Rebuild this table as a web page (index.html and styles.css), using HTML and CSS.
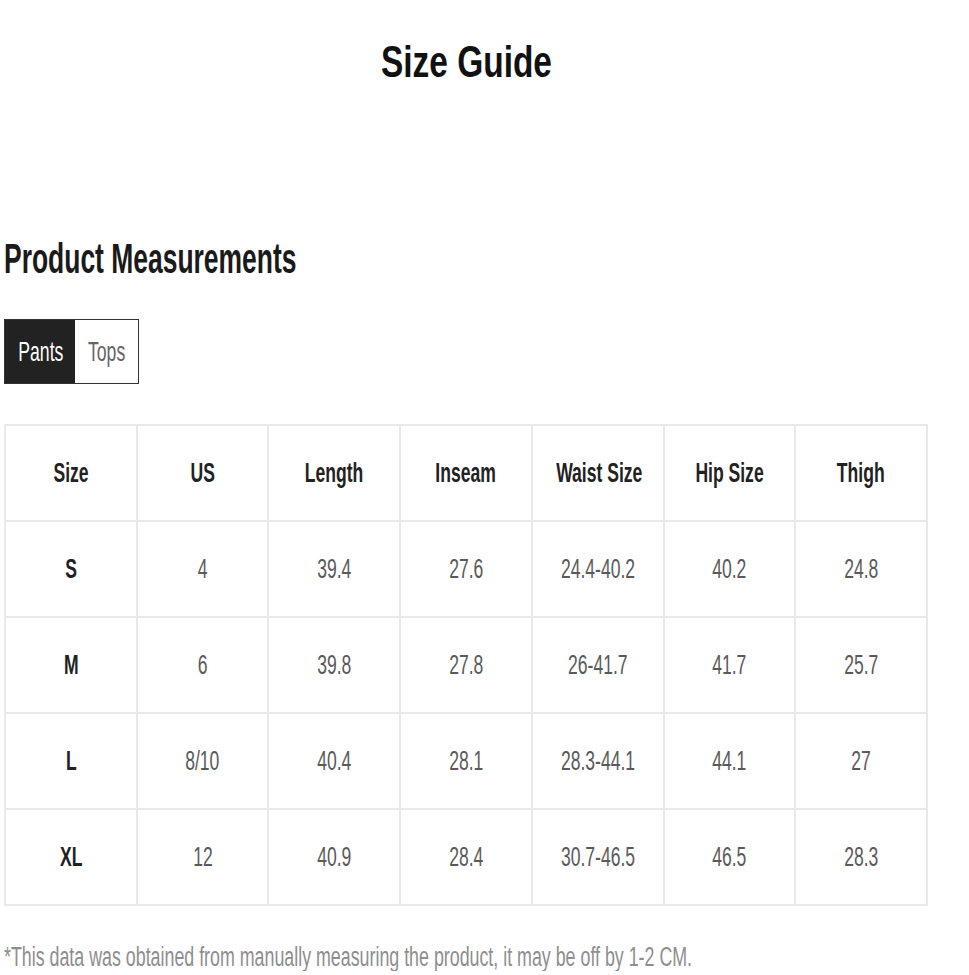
FILE: index.html
```html
<!DOCTYPE html>
<html lang="en">
<head>
  <meta charset="UTF-8">
  <meta name="viewport" content="width=device-width, initial-scale=1.0">
  <title>Size Guide</title>
  <link rel="stylesheet" href="styles.css">
</head>
<body>
  <div class="guide">
    <h1 class="guide-title"><span class="nar">Size Guide</span></h1>

    <h2 class="section-title"><span class="nar">Product Measurements</span></h2>

    <div class="tabs">
      <button type="button" class="tab active"><span class="nar">Pants</span></button>
      <button type="button" class="tab"><span class="nar">Tops</span></button>
    </div>

    <table class="size-table">
      <thead>
        <tr>
          <th><span class="nar">Size</span></th>
          <th><span class="nar">US</span></th>
          <th><span class="nar">Length</span></th>
          <th><span class="nar">Inseam</span></th>
          <th><span class="nar">Waist Size</span></th>
          <th><span class="nar">Hip Size</span></th>
          <th><span class="nar">Thigh</span></th>
        </tr>
      </thead>
      <tbody>
        <tr>
          <th><span class="nar">S</span></th>
          <td><span class="nar">4</span></td>
          <td><span class="nar">39.4</span></td>
          <td><span class="nar">27.6</span></td>
          <td><span class="nar">24.4-40.2</span></td>
          <td><span class="nar">40.2</span></td>
          <td><span class="nar">24.8</span></td>
        </tr>
        <tr>
          <th><span class="nar">M</span></th>
          <td><span class="nar">6</span></td>
          <td><span class="nar">39.8</span></td>
          <td><span class="nar">27.8</span></td>
          <td><span class="nar">26-41.7</span></td>
          <td><span class="nar">41.7</span></td>
          <td><span class="nar">25.7</span></td>
        </tr>
        <tr>
          <th><span class="nar">L</span></th>
          <td><span class="nar">8/10</span></td>
          <td><span class="nar">40.4</span></td>
          <td><span class="nar">28.1</span></td>
          <td><span class="nar">28.3-44.1</span></td>
          <td><span class="nar">44.1</span></td>
          <td><span class="nar">27</span></td>
        </tr>
        <tr>
          <th><span class="nar">XL</span></th>
          <td><span class="nar">12</span></td>
          <td><span class="nar">40.9</span></td>
          <td><span class="nar">28.4</span></td>
          <td><span class="nar">30.7-46.5</span></td>
          <td><span class="nar">46.5</span></td>
          <td><span class="nar">28.3</span></td>
        </tr>
      </tbody>
    </table>

    <p class="note"><span class="nar">*This data was obtained from manually measuring the product, it may be off by 1-2 CM.</span></p>
  </div>
</body>
</html>
```

FILE: styles.css
```css
/* Global */
body {
    margin: 0;
    padding: 0;
    background-color: #ffffff;
    font-family: "Liberation Sans", Arial, sans-serif;
    color: #222;
}

/* text in the shot is squeezed sideways */
.nar {
    display: inline-block;
    white-space: nowrap;
    transform: scaleX(0.65);
}

.guide {
    width: 924px;
    margin-left: 4px;
}

.guide-title {
    margin: 40px 0 0;
    font-size: 44px;
    line-height: 44px;
    text-align: center;
    color: #111;
}

.guide-title .nar {
    transform: scaleX(0.76);
}

.section-title {
    margin: 153px 0 0;
    font-size: 43px;
    line-height: 43px;
    font-weight: bold;
    color: #1a1a1a;
}

.section-title .nar {
    transform: scaleX(0.615);
    transform-origin: left center;
}

/* Tabs */
.tabs {
    display: inline-flex;
    margin-top: 39px;
    border: 1px solid #333;
}

.tab {
    height: 63px;
    padding: 0;
    border: none;
    background-color: #fff;
    font-family: inherit;
    font-size: 28px;
    color: #666;
    cursor: pointer;
}

.tab:first-child {
    width: 70px;
}

.tab:last-child {
    width: 63px;
}

.tab.active {
    background-color: #222;
    color: #fff;
}

.tab .nar {
    transform: scaleX(0.63);
}

/* Table */
.size-table {
    width: 924px;
    margin-top: 40px;
    border-collapse: collapse;
    table-layout: fixed;
    border: 2px solid #e0e0e0;
}

.size-table th,
.size-table td {
    height: 94px;
    padding: 0;
    border: 2px solid #e9e9e9;
    text-align: center;
    font-size: 27px;
}

.size-table th {
    font-weight: bold;
    color: #222;
}

.size-table td {
    color: #5a5a5a;
}

.note {
    margin: 38px 0 0;
    font-size: 27px;
    line-height: 27px;
    color: #8e8e8e;
}

/* give back the width the squeeze takes away */
.note .nar {
    margin-right: -360px;
    transform: scaleX(0.66);
    transform-origin: left center;
}
```
